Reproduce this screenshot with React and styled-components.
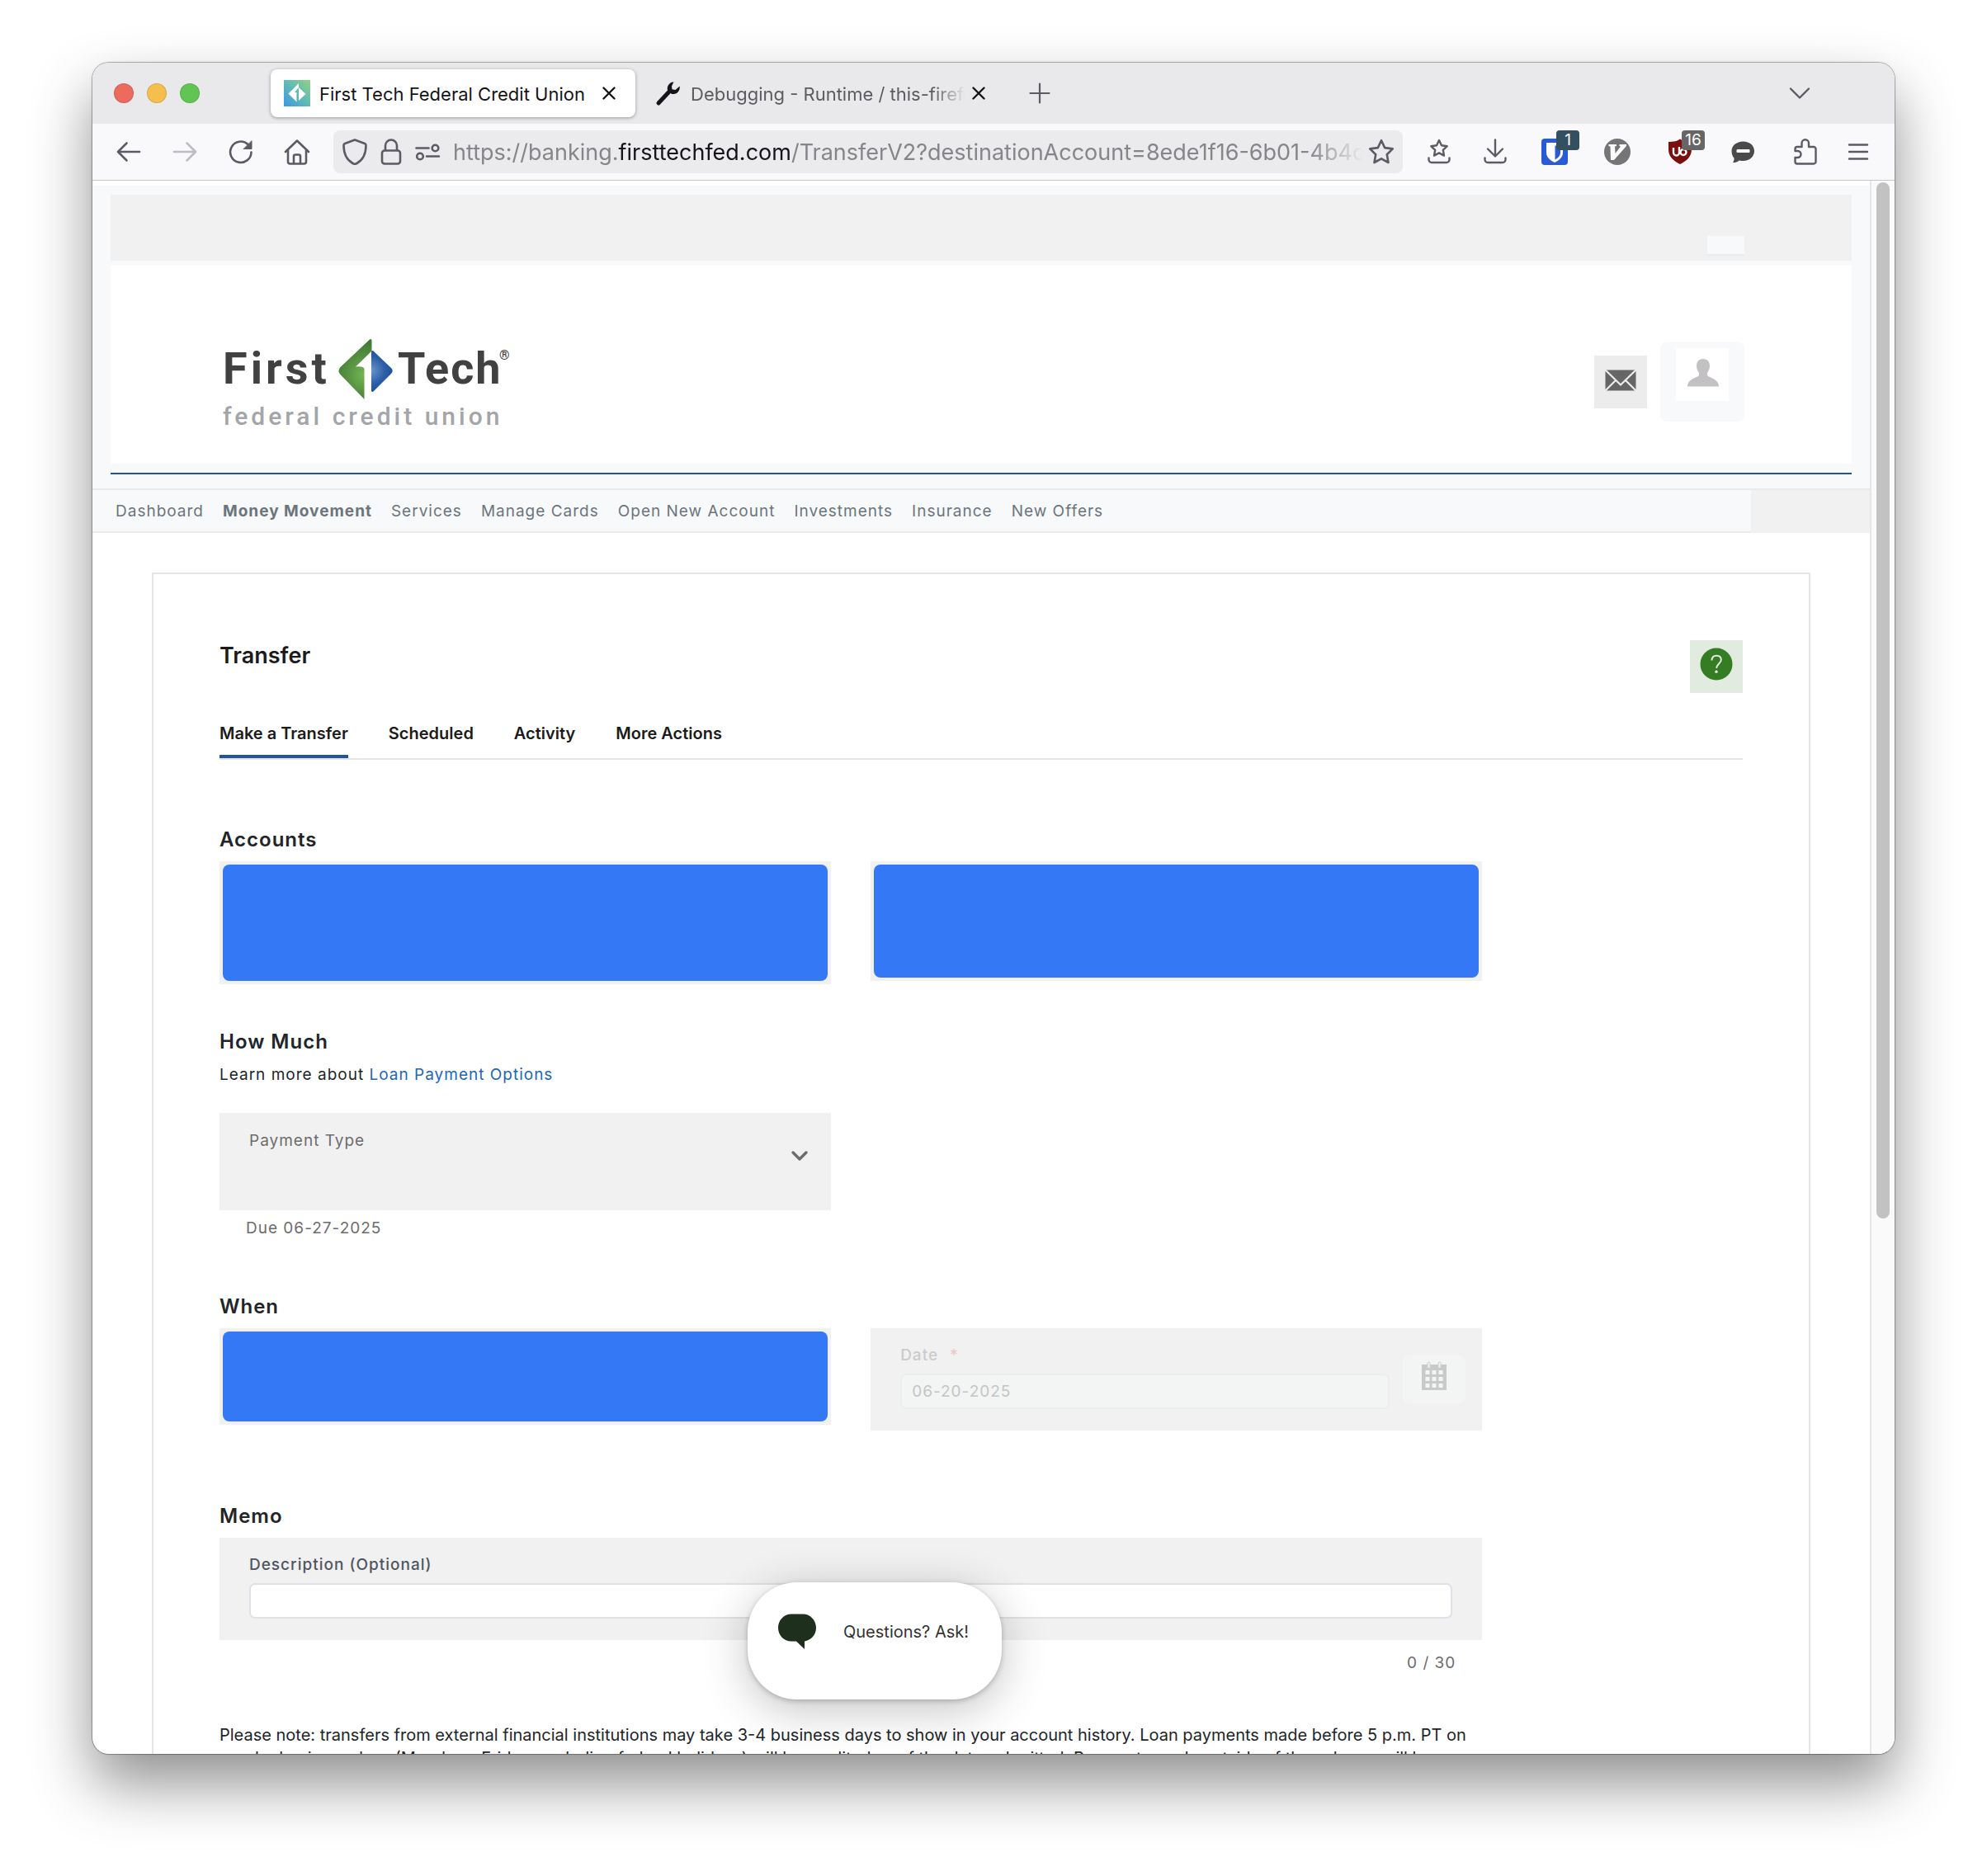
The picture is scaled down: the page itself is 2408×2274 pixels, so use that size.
import React from "react";
import styled, { createGlobalStyle } from "styled-components";

const sans = `Inter, "Liberation Sans", sans-serif`;
const tint = "#f7f9fb";
const panel = "#f1f1f1";
const rule = "#e6e6e6";
const navy = "#1f559e";

const GlobalStyle = createGlobalStyle`
  *, *::before, *::after { box-sizing: border-box; }
  html, body { margin: 0; background: #fff; }
  body { font-family: ${sans}; font-size: 20px; line-height: 28px; color: #212529; }
  button, input, select { font: inherit; color: inherit; margin: 0; padding: 0; border: 0; background: none; letter-spacing: inherit; }
  a { color: inherit; text-decoration: none; }
  svg { display: block; flex: none; }
`;

/* ---------- Browser window ---------- */

const Desktop = styled.div`
  height: 100vh;
  padding: 76px 112px 148px;
  overflow: hidden;
`;

const Window = styled.div`
  height: 100%;
  display: flex;
  flex-direction: column;
  border-radius: 20px;
  overflow: hidden;
  background: #fff;
  box-shadow: 0 0 0 1px rgba(0, 0, 0, 0.24), 0 0 3px rgba(0, 0, 0, 0.2), 0 36px 72px rgba(0, 0, 0, 0.44);
`;

const TabStrip = styled.div`
  display: flex;
  align-items: center;
  height: 74px;
  flex: none;
  padding: 0 99px 0 26px;
  background: #e9e9eb;
  color: #15141a;
`;

const Lights = styled.div`
  display: flex;
  gap: 16px;
  width: 190px;
`;

const Light = styled.button`
  width: 24px;
  height: 24px;
  border-radius: 50%;
  border: 1px solid rgba(0, 0, 0, 0.12);
  background: ${(p) => p.$color};
`;

const Tabs = styled.div`
  display: flex;
  align-items: center;
  gap: 8px;
  margin-right: 24px;
`;

const Tab = styled.div`
  display: flex;
  align-items: center;
  height: 58px;
  width: 442px;
  padding: 0 ${(p) => (p.$active ? 16 : 18)}px 0 16px;
  border-radius: 8px;
  font-size: 22px;
  background: ${(p) => (p.$active ? "#fff" : "transparent")};
  color: ${(p) => (p.$active ? "#15141a" : "#5b5b60")};
  box-shadow: ${(p) => (p.$active ? "0 1px 4px rgba(0,0,0,0.35)" : "none")};
`;

const TabTitle = styled.span`
  flex: 1;
  min-width: 0;
  margin-left: 11px;
  padding-top: 2px;
  white-space: nowrap;
  overflow: hidden;
  mask-image: ${(p) => (p.$fade ? "linear-gradient(to right, #000 88%, transparent)" : "none")};
`;

const PlainButton = styled.button`
  display: flex;
  align-items: center;
  justify-content: center;
  position: relative;
  width: 32px;
  height: 32px;
  flex: none;
  color: ${(p) => p.$color || "#5b5b66"};
`;

const Spacer = styled.span`
  flex: 1;
`;

const Toolbar = styled.div`
  display: flex;
  align-items: center;
  height: 69px;
  flex: none;
  padding: 0 28px;
  background: #f9f9fb;
  border-bottom: 1px solid #c6c6ca;
`;

const ToolGroup = styled.div`
  display: flex;
  align-items: center;
  flex: none;
  gap: ${(p) => p.$gap}px;
  margin-left: ${(p) => p.$before || 0}px;
`;

const UrlBar = styled.div`
  display: flex;
  align-items: center;
  flex: 1;
  min-width: 0;
  height: 52px;
  margin: 0 28px;
  padding: 0 10px;
  border-radius: 8px;
  background: #ebebed;
`;

const Url = styled.div`
  flex: 1;
  min-width: 0;
  margin: 0 6px 0 15px;
  padding-top: 2px;
  overflow: hidden;
  white-space: nowrap;
  font-size: 27px;
  line-height: 36px;
  color: #85858a;
  outline: none;
  mask-image: linear-gradient(to right, #000 94%, transparent);
`;

const Host = styled.span`
  color: #15141a;
`;

const Badge = styled.span`
  position: absolute;
  left: 18px;
  top: -10px;
  min-width: 28px;
  height: 24px;
  padding: 0 3px;
  border-radius: 4px;
  background: ${(p) => p.$color};
  color: #fff;
  font-size: 19px;
  line-height: 24px;
`;

const Viewport = styled.div`
  flex: 1;
  min-height: 0;
  display: flex;
  position: relative;
`;

const Page = styled.div`
  flex: 1;
  min-width: 0;
  overflow: hidden;
`;

const ScrollTrack = styled.div`
  width: 30px;
  flex: none;
  padding: 2px 6px;
  border-left: 2px solid ${rule};
  background: #fafafa;
`;

const ScrollThumb = styled.div`
  width: 16px;
  height: 66%;
  border-radius: 8px;
  background: #c2c2c2;
`;

/* ---------- Bank header ---------- */

const Header = styled.header`
  margin-top: 6px;
  padding: 11px 22px 17px;
  background: ${tint};
  border-bottom: 2px solid #e8eaec;
`;

const UtilityBar = styled.div`
  display: flex;
  align-items: flex-end;
  justify-content: flex-end;
  height: 80px;
  padding: 0 130px 6px 0;
  background: ${panel};
`;

const UtilityChip = styled.button`
  width: 45px;
  height: 24px;
  background: ${tint};
  border-bottom: 2px solid #eaedf0;
`;

const Masthead = styled.div`
  display: flex;
  align-items: center;
  justify-content: space-between;
  height: 241px;
  margin: 5px 0 11px;
  padding: 0 130px 0 136px;
  background: #fff;
`;

const MastheadLine = styled.div`
  height: 2px;
  background: ${navy};
`;

const LogoLink = styled.a`
  margin-top: 48px;
`;

const HeaderActions = styled.div`
  display: flex;
  align-items: center;
  gap: 16px;
  margin-top: 42px;
`;

const SquareButton = styled.button`
  display: flex;
  align-items: center;
  justify-content: center;
  width: 64px;
  height: 64px;
  flex: none;
  padding-bottom: ${(p) => p.$lift || 0}px;
  background: ${(p) => p.$color};
`;

const ProfileCard = styled.div`
  display: flex;
  justify-content: center;
  width: 102px;
  height: 96px;
  padding-top: 7px;
  border-radius: 8px;
  background: ${tint};
`;

const Nav = styled.nav`
  display: flex;
  height: 52px;
  background: ${tint};
`;

const NavLinks = styled.div`
  display: flex;
  align-items: center;
  flex: 1;
  gap: 23px;
  padding: 2px 0 0 28px;
  border-bottom: 2px solid #e8eaec;
  color: #6c757d;
  font-size: 19px;
  letter-spacing: 1px;
`;

const NavLink = styled.a`
  font-weight: ${(p) => (p.$active ? 700 : 400)};
`;

const NavEnd = styled.div`
  width: 144px;
  background: ${panel};
`;

/* ---------- Transfer card ---------- */

const Card = styled.main`
  margin: 48px 72px 0;
  padding: 80px;
  border: 2px solid ${rule};
`;

const TitleRow = styled.div`
  display: flex;
  justify-content: space-between;
  align-items: flex-start;
`;

const Title = styled.h1`
  margin: 0;
  font-size: 27px;
  line-height: 38px;
  font-weight: 600;
  color: #1b1b1b;
`;

const TabList = styled.div`
  display: flex;
  gap: 49px;
  margin-top: 35px;
  border-bottom: 2px solid ${rule};
`;

const SectionTab = styled.button`
  height: 44px;
  padding-bottom: 12px;
  border-bottom: 4px solid ${(p) => (p.$active ? navy : "transparent")};
  font-weight: 600;
  color: #1b1b1b;
`;

const Form = styled.form`
  width: calc((100% + 48px) * 10 / 12 - 48px);
  font-size: 19px;
  letter-spacing: 1px;
`;

const Section = styled.section`
  padding-top: ${(p) => p.$top}px;
`;

const Heading = styled.h2`
  margin: 0 0 8px;
  font-size: 24px;
  line-height: 36px;
  font-weight: 600;
`;

const Columns = styled.div`
  display: grid;
  grid-template-columns: 1fr 1fr;
  gap: 48px;
  align-items: start;
`;

const Redacted = styled.div`
  height: ${(p) => p.$height}px;
  padding: 4px;
  background: ${panel};

  &::before {
    content: "";
    display: block;
    height: 100%;
    border-radius: 8px;
    background: #3478f6;
  }
`;

const Lead = styled.p`
  margin: 0 0 32px;
`;

const TextLink = styled.a`
  color: #2166b8;
`;

const SelectBox = styled.div`
  display: flex;
  align-items: center;
  padding: 20px 24px 34px 36px;
  background: ${panel};
  color: #6c6c6c;
`;

const FieldBody = styled.div`
  display: flex;
  flex-direction: column;
  flex: 1;
`;

const Select = styled.select`
  appearance: none;
  height: 36px;
`;

const Hint = styled.p`
  margin: ${(p) => (p.$counter ? 14 : 8)}px 0 0;
  padding: 0 32px;
  text-align: ${(p) => (p.$counter ? "right" : "left")};
  color: #6c6c6c;
`;

const FieldBox = styled.div`
  display: flex;
  align-items: center;
  gap: 16px;
  padding: 19px ${(p) => (p.$disabled ? 20 : 36)}px 26px 36px;
  background: ${panel};
  color: ${(p) => (p.$disabled ? "#cbcbcc" : "#4f5660")};
`;

const Label = styled.label`
  margin-bottom: ${(p) => (p.$tight ? 0 : 8)}px;
  font-weight: ${(p) => (p.$tight ? 400 : 500)};
`;

const Required = styled.span`
  margin-left: 14px;
  color: #ecc8ca;
`;

const TextInput = styled.input`
  width: 100%;
  height: 43px;
  padding: 0 12px;
  border: 2px solid #dee2e6;
  border-radius: 7px;
  background: #fff;

  &:disabled {
    border-color: #eceeee;
    background: #f3f5f4;
    color: #c3c4c4;
  }
`;

const CalendarButton = styled.button`
  display: flex;
  align-items: center;
  justify-content: center;
  width: 76px;
  height: 60px;
  margin-top: 6px;
  padding-bottom: 7px;
  border-radius: 10px;
  background: #f3f5f4;
  color: #c9c9ca;
`;

const Note = styled.p`
  margin: 59px 0 0;
  font-size: 20px;
  letter-spacing: normal;
`;

const ChatButton = styled.button`
  position: absolute;
  left: 794px;
  bottom: 66px;
  display: flex;
  align-items: center;
  gap: 33px;
  width: 308px;
  height: 142px;
  padding: 0 37px 22px;
  border-radius: 60px;
  background: #fff;
  color: #333;
  white-space: nowrap;
  box-shadow: 0 2px 6px rgba(0, 0, 0, 0.22), 0 12px 56px rgba(0, 0, 0, 0.24);
`;

/* ---------- Icons ---------- */

const Line = ({ w = 32, h = 32, sw = 2.6, children }) => (
  <svg width={w} height={h} viewBox={`0 0 ${w} ${h}`} fill="none" stroke="currentColor" strokeWidth={sw} strokeLinecap="round" strokeLinejoin="round" aria-hidden="true">
    {children}
  </svg>
);

const Cross = () => <Line w={16} h={16} sw={2.4}><path d="M1.5 1.5l13 13M14.5 1.5l-13 13" /></Line>;
const Plus = () => <Line w={26} h={26} sw={2.2}><path d="M13 1.5v23M1.5 13h23" /></Line>;
const ChevronThin = () => <Line w={28} h={16} sw={2.4}><path d="M3 2.5l11 11 11-11" /></Line>;
const Chevron = () => <Line w={28} h={16} sw={3.4}><path d="M6 4l8 8 8-8" /></Line>;
const Back = () => <Line><path d="M29 16H4M13.500 5.500L3 16l10.500 10.500" /></Line>;
const Forward = () => <Line><path d="M3 16h25M18.500 5.500L29 16l-10.500 10.500" /></Line>;
const Reload = () => (
  <Line>
    <path d="M28.500 16.500A12.700 12.700 0 1 1 24.500 7" />
    <path d="M29 3v9.500h-9.500z" fill="currentColor" strokeWidth="1" />
  </Line>
);
const Home = () => (
  <Line>
    <path d="M2 16L16 2.500 30 16M5 14v14a2.500 2.500 0 0 0 2.500 2.500h17A2.500 2.500 0 0 0 27 28V14" />
    <path d="M12 30V21.500a2 2 0 0 1 2-2h4a2 2 0 0 1 2 2V30" />
  </Line>
);
const Shield = () => <Line><path d="M16 1.500l12 4.500c1 .4 1.500 1 1.500 2 0 10-4 18-11 22a5 5 0 0 1-5 0C6.500 26 2.500 18 2.500 8c0-1 .5-1.600 1.500-2z" /></Line>;
const Lock = () => <Line><rect x="5" y="14.500" width="22" height="16" rx="3" /><path d="M9 14V8.500a7 7 0 0 1 14 0V14" /></Line>;
const Permissions = () => (
  <Line>
    <path d="M2.500 11.500h15M15 21.500h15" />
    <circle cx="25.500" cy="11.500" r="3.800" />
    <circle cx="7" cy="21.500" r="3.800" />
  </Line>
);
const starPath = "M16 2.200l4.200 8.900 9.600 1.300-7 6.800 1.700 9.800L16 24.300 7.500 29l1.700-9.800-7-6.800 9.600-1.300z";
const Star = () => <Line><path d={starPath} /></Line>;
const SavedPages = () => (
  <Line sw={2.4}>
    <path d="M16 2l3 6.300 6.700.9-4.900 4.700 1.200 6.700-6-3.200-6 3.200 1.200-6.700-4.900-4.700 6.700-.9z" />
    <path d="M3.500 23.500v2a3.500 3.500 0 0 0 3.500 3.500h18a3.500 3.500 0 0 0 3.500-3.500v-2" />
  </Line>
);
const Download = () => (
  <Line sw={2.4}>
    <path d="M16 1.500V21M7 12.500l9 9 9-9M3.500 23.500v2a3.500 3.500 0 0 0 3.500 3.500h18a3.500 3.500 0 0 0 3.500-3.500v-2" />
  </Line>
);
const Puzzle = () => (
  <Line sw={2.4}>
    <path d="M3.500 15v-2.500a2.500 2.500 0 0 1 2.500-2.500h5.500V5.500a4 4 0 0 1 8.500 0V10H26a2.500 2.500 0 0 1 2.500 2.500V28a2.500 2.500 0 0 1-2.500 2.500H6A2.500 2.500 0 0 1 3.500 28v-5h3a4 4 0 0 0 0-8z" />
  </Line>
);
const Menu = () => <Line sw={2.4}><path d="M5 7.500h22M5 16h22M5 24.500h22" /></Line>;
const Wrench = () => (
  <svg width="32" height="32" viewBox="0 0 32 32" aria-hidden="true">
    <path d="M4 28L18 13" stroke="#15141a" strokeWidth="5" strokeLinecap="round" />
    <path d="M22.500 2.300a8 8 0 0 0-7.500 9.900l4.700 4.600A8 8 0 0 0 29.600 7.500L24.500 12l-4-.8-.5-3.800z" fill="#15141a" />
  </svg>
);
const Favicon = () => (
  <svg width="32" height="32" viewBox="0 0 32 32" aria-hidden="true">
    <defs>
      <linearGradient id="fav" x1="0" y1="1" x2="1" y2="0">
        <stop offset="0" stopColor="#3e97e4" />
        <stop offset="0.55" stopColor="#62bdb2" />
        <stop offset="1" stopColor="#93d084" />
      </linearGradient>
    </defs>
    <rect width="32" height="32" fill="url(#fav)" />
    <path d="M18 4v5l-5 6h2.500v11.500L5.500 16.500z" fill="#fff" />
    <path d="M18 9l8.500 8L18 25z" fill="#fff" />
  </svg>
);
const Bitwarden = () => (
  <svg width="32" height="32" viewBox="0 0 32 32" aria-hidden="true">
    <rect width="32" height="32" rx="4" fill="#2a5bd7" />
    <path d="M6 5h20v12c0 6-5 9.500-10 12C11 26.500 6 23 6 17z" fill="#fff" />
    <path d="M16.500 8.500H23V17c0 4-3 6.500-6.500 8.500z" fill="#2a5bd7" />
  </svg>
);
const Vimium = () => (
  <svg width="32" height="32" viewBox="0 0 32 32" aria-hidden="true">
    <circle cx="16" cy="16" r="16" fill="#757575" />
    <path d="M5.500 7h9.500v2l-2 .5.500 8.500L20 9.500l-1.500-.5V7H27v2L12 26H8L7.500 9.500l-2-.5z" fill="#fff" />
  </svg>
);
const Ublock = () => (
  <svg width="32" height="32" viewBox="0 0 32 32" aria-hidden="true">
    <path d="M16 .5c4 3 8 3.500 14 3.500v9c0 9-6 14-14 18C8 27 2 22 2 13V4c6 0 10-.5 14-3.500z" fill="#7a0f0b" />
    <path d="M8 11v6a3.500 3.500 0 0 0 7 0v-6M15 17v-7" fill="none" stroke="#fff" strokeWidth="2.400" />
    <circle cx="20" cy="16.500" r="3.500" fill="none" stroke="#fff" strokeWidth="2.400" />
  </svg>
);
const Speech = () => (
  <svg width="32" height="32" viewBox="0 0 32 32" aria-hidden="true">
    <path d="M16.500 3.500c8 0 13.500 5 13.500 11.500S24.500 27 16.500 27c-1.500 0-3-.2-4.500-.6C10 28 7 29 4 29c1.200-1.700 1.700-3.500 1.600-5.200C3.500 21.500 2.500 18.500 2.500 15 2.500 8.500 8.500 3.500 16.500 3.500z" fill="#4a4a4a" />
    <rect x="8.500" y="13" width="16" height="4" rx="1" fill="#fff" />
  </svg>
);

const Logo = () => (
  <svg width="352" height="112" viewBox="0 0 352 112" role="img" aria-label="First Tech federal credit union">
    <defs>
      <radialGradient id="green" gradientUnits="userSpaceOnUse" cx="172" cy="44" r="42">
        <stop offset="0" stopColor="#77b751" />
        <stop offset="0.5" stopColor="#569242" />
        <stop offset="1" stopColor="#3f7632" />
      </radialGradient>
      <radialGradient id="blue" gradientUnits="userSpaceOnUse" cx="180" cy="39" r="27">
        <stop offset="0" stopColor="#6a96cb" />
        <stop offset="0.6" stopColor="#2d5fa6" />
        <stop offset="1" stopColor="#1c4f9b" />
      </radialGradient>
    </defs>
    <g fontFamily='Roboto, "Liberation Sans", sans-serif' fill="#414141">
      <text x="0" y="55" fontSize="54" fontWeight="700" letterSpacing="4">First</text>
      <text x="212" y="55" fontSize="54" fontWeight="700" letterSpacing="2">Tech</text>
      <text x="335" y="26" fontSize="16" fontWeight="700">®</text>
      <text x="0" y="105" fontSize="30" fontWeight="500" letterSpacing="4" fill="#a3a5a8">federal credit union</text>
    </g>
    <path d="M178 1.500q2.500-1.500 2.500 1.500v12.500L161 34.500q10-1 10.500 3V74L142.500 44q-4-4.500 0-9z" fill="url(#green)" />
    <path d="M180 16q1-2 3 0l21 20q3.500 3.500 0 7L183 64q-2 2-3 0z" fill="url(#blue)" />
  </svg>
);

const Envelope = () => (
  <svg width="38" height="26" viewBox="0 0 38 26" aria-hidden="true">
    <rect x="0.5" y="0.5" width="37" height="25" rx="1" fill="#666" />
    <path d="M0 0l19 18.500L38 0M0 26l13-13M38 26L25 13" fill="none" stroke="#ececec" strokeWidth="2.200" />
  </svg>
);
const Person = () => (
  <svg width="40" height="34" viewBox="-1 0 40 34" aria-hidden="true">
    <path d="M20 0c5 0 8 3.500 8 8.500 0 4-1.500 6-3 8.500v3c2 3 13.500 3.500 14 13.500H1C1.500 23.500 13 23 15 20v-3c-1.500-2.500-3-4.500-3-8.500C12 3.500 15 0 20 0z" fill="#c4c1c5" />
  </svg>
);
const Help = () => (
  <svg width="40" height="40" viewBox="0 0 40 40" aria-hidden="true">
    <circle cx="20" cy="20" r="19.500" fill="#347d22" />
    <path d="M14.500 15.500c0-3.500 2.200-5.800 5.700-5.800 3.400 0 5.600 2 5.600 5 0 4.500-5.600 5.300-5.600 10.300" fill="none" stroke="#e1ebdf" strokeWidth="2" />
    <circle cx="20" cy="29.200" r="1.700" fill="#e1ebdf" />
  </svg>
);
const Calendar = () => (
  <svg width="32" height="36" viewBox="0 0 32 36" aria-hidden="true">
    <path fillRule="evenodd" fill="currentColor" d="M1 4h30v31H1zM5.500 11v5h5v-5zM13.500 11v5h5v-5zM21.500 11v5h5v-5zM5.500 19v5h5v-5zM13.500 19v5h5v-5zM21.500 19v5h5v-5zM5.500 27v5h5v-5zM13.500 27v5h5v-5zM21.500 27v5h5v-5z" />
    <path d="M9.500 1.500v6M22.500 1.500v6" stroke="#f3f5f4" strokeWidth="3.500" />
    <path d="M8 7V2.500a1.500 1.500 0 0 1 3 0V7M21 7V2.500a1.500 1.500 0 0 1 3 0V7" fill="none" stroke="currentColor" strokeWidth="1" />
  </svg>
);
const Bubble = () => (
  <svg width="46" height="44" viewBox="0 0 46 44" aria-hidden="true">
    <path d="M16 .5h14c9 0 16 7.500 16 16.500S40 32 32 33.500V43L22 33.500h-6C7 33.500 0 26 0 17S7 .5 16 .5z" fill="#1f2f1e" />
  </svg>
);

/* ---------- App ---------- */

const navItems = ["Dashboard", "Money Movement", "Services", "Manage Cards", "Open New Account", "Investments", "Insurance", "New Offers"];
const sectionTabs = ["Make a Transfer", "Scheduled", "Activity", "More Actions"];

export default function App() {
  return (
    <>
      <GlobalStyle />
      <Desktop>
        <Window>
          <TabStrip>
            <Lights>
              <Light $color="#ed6a5e" aria-label="Close window" />
              <Light $color="#f5bf4f" aria-label="Minimize" />
              <Light $color="#61c554" aria-label="Zoom" />
            </Lights>
            <Tabs>
              <Tab $active>
                <Favicon />
                <TabTitle>First Tech Federal Credit Union</TabTitle>
                <PlainButton $color="#15141a" aria-label="Close tab"><Cross /></PlainButton>
              </Tab>
              <Tab>
                <Wrench />
                <TabTitle $fade>Debugging - Runtime / this-firefox</TabTitle>
                <PlainButton $color="#15141a" aria-label="Close tab"><Cross /></PlainButton>
              </Tab>
            </Tabs>
            <PlainButton aria-label="New tab"><Plus /></PlainButton>
            <Spacer />
            <PlainButton aria-label="List all tabs"><ChevronThin /></PlainButton>
          </TabStrip>

          <Toolbar>
            <ToolGroup $gap={36}>
              <PlainButton aria-label="Back"><Back /></PlainButton>
              <PlainButton $color="#bdbdc3" aria-label="Forward"><Forward /></PlainButton>
              <PlainButton aria-label="Reload"><Reload /></PlainButton>
              <PlainButton aria-label="Home"><Home /></PlainButton>
            </ToolGroup>
            <UrlBar>
              <ToolGroup $gap={12}>
                <PlainButton aria-label="Protections"><Shield /></PlainButton>
                <PlainButton aria-label="Site security"><Lock /></PlainButton>
                <PlainButton aria-label="Permissions"><Permissions /></PlainButton>
              </ToolGroup>
              <Url role="textbox" aria-label="Address" tabIndex={0}>
                https://banking.<Host>firsttechfed.com</Host>/TransferV2?destinationAccount=8ede1f16-6b01-4b4d
              </Url>
              <PlainButton aria-label="Bookmark"><Star /></PlainButton>
            </UrlBar>
            <ToolGroup $gap={36}>
              <PlainButton aria-label="Saved bookmarks"><SavedPages /></PlainButton>
              <PlainButton aria-label="Downloads"><Download /></PlainButton>
            </ToolGroup>
            <ToolGroup $gap={44} $before={40}>
              <PlainButton aria-label="Password manager"><Bitwarden /><Badge $color="#334f60">1</Badge></PlainButton>
              <PlainButton aria-label="Keyboard navigation"><Vimium /></PlainButton>
              <PlainButton aria-label="Content blocker"><Ublock /><Badge $color="#666">16</Badge></PlainButton>
              <PlainButton aria-label="Comments"><Speech /></PlainButton>
              <PlainButton aria-label="Extensions"><Puzzle /></PlainButton>
            </ToolGroup>
            <ToolGroup $gap={36} $before={32}>
              <PlainButton aria-label="Menu"><Menu /></PlainButton>
            </ToolGroup>
          </Toolbar>

          <Viewport>
            <Page>
              <Header>
                <UtilityBar><UtilityChip aria-label="Skip" /></UtilityBar>
                <Masthead>
                  <LogoLink href="#home"><Logo /></LogoLink>
                  <HeaderActions>
                    <SquareButton $color="#ececec" $lift={4} aria-label="Messages"><Envelope /></SquareButton>
                    <ProfileCard>
                      <SquareButton $color="#fff" $lift={4} aria-label="Profile"><Person /></SquareButton>
                    </ProfileCard>
                  </HeaderActions>
                </Masthead>
                <MastheadLine />
              </Header>
              <Nav>
                <NavLinks>
                  {navItems.map((item) => (
                    <NavLink key={item} href="#nav" $active={item === "Money Movement"}>{item}</NavLink>
                  ))}
                </NavLinks>
                <NavEnd />
              </Nav>

              <Card>
                <TitleRow>
                  <Title>Transfer</Title>
                  <SquareButton $color="#e1ebdf" $lift={7} aria-label="Help"><Help /></SquareButton>
                </TitleRow>
                <TabList role="tablist">
                  {sectionTabs.map((tab, i) => (
                    <SectionTab key={tab} role="tab" aria-selected={i === 0} $active={i === 0}>{tab}</SectionTab>
                  ))}
                </TabList>

                <Form>
                  <Section $top={79}>
                    <Heading>Accounts</Heading>
                    <Columns>
                      <Redacted $height={149} />
                      <Redacted $height={145} />
                    </Columns>
                  </Section>

                  <Section $top={52}>
                    <Heading>How Much</Heading>
                    <Lead>Learn more about <TextLink href="#loan">Loan Payment Options</TextLink></Lead>
                    <Columns>
                      <div>
                        <SelectBox>
                          <FieldBody>
                            <Label htmlFor="type" $tight>Payment Type</Label>
                            <Select id="type" defaultValue=""><option value="" /></Select>
                          </FieldBody>
                          <Chevron />
                        </SelectBox>
                        <Hint>Due 06-27-2025</Hint>
                      </div>
                    </Columns>
                  </Section>

                  <Section $top={63}>
                    <Heading>When</Heading>
                    <Columns>
                      <Redacted $height={117} />
                      <FieldBox $disabled>
                        <FieldBody>
                          <Label htmlFor="date">Date<Required>*</Required></Label>
                          <TextInput id="date" disabled defaultValue="06-20-2025" />
                        </FieldBody>
                        <CalendarButton type="button" disabled aria-label="Pick a date"><Calendar /></CalendarButton>
                      </FieldBox>
                    </Columns>
                  </Section>

                  <Section $top={86}>
                    <Heading>Memo</Heading>
                    <FieldBox>
                      <FieldBody>
                        <Label htmlFor="memo">Description (Optional)</Label>
                        <TextInput id="memo" />
                      </FieldBody>
                    </FieldBox>
                    <Hint $counter>0 / 30</Hint>
                  </Section>

                  <Note>
                    Please note: transfers from external financial institutions may take 3-4 business days to show in your account history. Loan payments made before 5 p.m. PT on regular business days (Monday – Friday, excluding federal holidays) will be credited as of the date submitted. Payments made outside of these hours will be
                  </Note>
                </Form>
              </Card>
            </Page>
            <ScrollTrack><ScrollThumb /></ScrollTrack>
            <ChatButton><Bubble />Questions? Ask!</ChatButton>
          </Viewport>
        </Window>
      </Desktop>
    </>
  );
}
